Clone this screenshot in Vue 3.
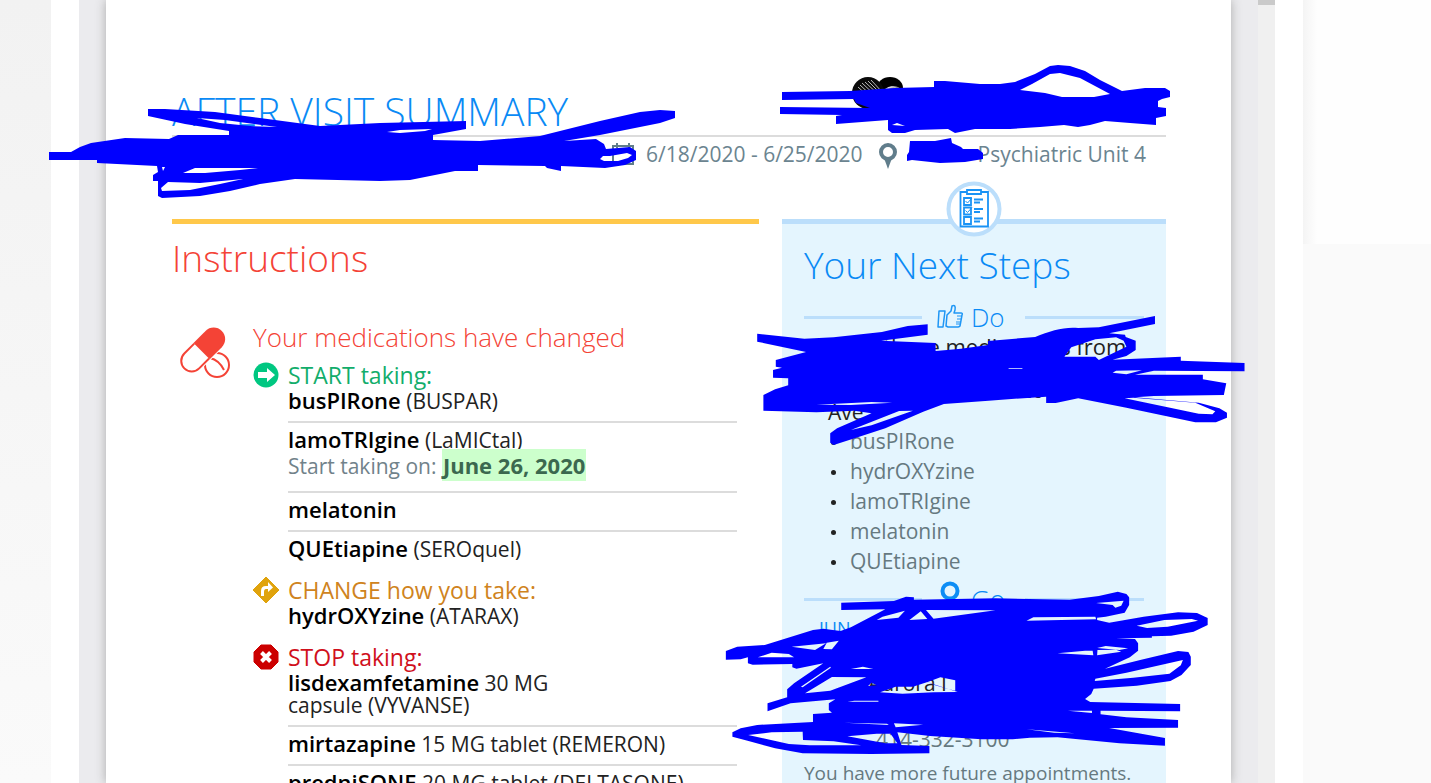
<script setup>
    const groups = [
        {
            type: 'start',
            title: 'START taking:',
            meds: [
                { name: 'busPIRone', detail: '(BUSPAR)' },
                { name: 'lamoTRIgine', detail: '(LaMICtal)', start: 'June 26, 2020' },
                { name: 'melatonin', detail: '' },
                { name: 'QUEtiapine', detail: '(SEROquel)' },
            ],
        },
        {
            type: 'change',
            title: 'CHANGE how you take:',
            meds: [
                { name: 'hydrOXYzine', detail: '(ATARAX)' },
            ],
        },
        {
            type: 'stop',
            title: 'STOP taking:',
            meds: [
                { name: 'lisdexamfetamine', detail: '30 MG capsule (VYVANSE)', narrow: true },
                { name: 'mirtazapine', detail: '15 MG tablet (REMERON)' },
                { name: 'predniSONE', detail: '20 MG tablet (DELTASONE)' },
            ],
        },
    ];

    const pickups = ['busPIRone', 'hydrOXYzine', 'lamoTRIgine', 'melatonin', 'QUEtiapine'];
</script>

<template>
    <div class="viewer">
        <div class="rail-left"></div>
        <div class="desk">
            <main class="page">
                <header class="page-header">
                    <h1>AFTER VISIT SUMMARY</h1>
                    <svg class="logo" viewBox="0 0 56 34" aria-hidden="true">
                        <ellipse cx="39" cy="12" rx="13" ry="11" fill="#000" />
                        <path d="M32 20Q34 11 42 10Q48 10 52 15L54 12L55 20Z" fill="#888" />
                        <path d="M34 13Q40 8 46 12Q40 10 35 15Z" fill="#ddd" />
                        <ellipse cx="17" cy="17" rx="16" ry="16" fill="#0a0a0a" />
                        <path d="M14 6L29 20M17 5L31 19M20 4L32 17M11 7L26 21M9 9L22 21M7 11L18 21" fill="none" stroke="#bbb" stroke-width="1" />
                    </svg>
                </header>
                <div class="meta">
                    <svg class="calendar" viewBox="0 0 22 22" aria-hidden="true">
                        <path d="M1 3H21V21H1Z M1 7H21 M5 0V5 M17 0V5" fill="none" stroke="#607d8b" stroke-width="2" />
                    </svg>
                    <span class="dates">6/18/2020 - 6/25/2020</span>
                    <svg class="pin" viewBox="0 0 18 26" aria-hidden="true">
                        <circle cx="9" cy="9" r="7" fill="none" stroke="#607d8b" stroke-width="4" />
                        <path d="M5 15H13L9 26Z" fill="#607d8b" />
                    </svg>
                    <span class="unit">Psychiatric Unit 4</span>
                </div>

                <div class="columns">
                    <section class="instructions">
                        <h2>Instructions</h2>
                        <div class="med-block">
                            <svg class="pills" viewBox="0 0 52 52" aria-hidden="true">
                                <circle cx="38" cy="38" r="12" fill="#fff" stroke="#f44336" stroke-width="2" />
                                <path d="M31 31Q40 33 45 43" fill="none" stroke="#f44336" stroke-width="2" />
                                <g transform="rotate(-45 23 23)">
                                    <rect x="-4" y="11" width="56" height="25" rx="12" fill="#fff" />
                                    <path d="M24 13H10A10 10 0 0 0 10 34H24" transform="translate(-2 0)" fill="#fff" stroke="#f44336" stroke-width="2" />
                                    <path d="M22 12H39A11 11 0 0 1 39 35H22Z" fill="#f44336" />
                                </g>
                            </svg>
                            <div class="med-body">
                                <h3>Your medications have changed</h3>
                                <div class="group" v-for="group in groups" :key="group.type">
                                    <svg v-if="group.type == 'start'" class="group-icon" viewBox="0 0 26 26" aria-hidden="true">
                                        <circle cx="13" cy="13" r="12.5" fill="#00c781" />
                                        <path d="M5 10H14V6L22 13L14 20V16H5Z" fill="#fff" />
                                    </svg>
                                    <svg v-else-if="group.type == 'change'" class="group-icon" viewBox="0 0 26 26" aria-hidden="true">
                                        <path d="M13 0L26 13L13 26L0 13Z" fill="#e0a30c" stroke="#e0a30c" stroke-linejoin="round" />
                                        <path d="M8 19V14Q8 9 13 9H15V5L20 10.500L15 15V12H13Q11 12 11 15V19Z" fill="#fff" />
                                    </svg>
                                    <svg v-else class="group-icon" viewBox="0 0 26 26" aria-hidden="true">
                                        <path d="M8 1H18L25 8V18L18 25H8L1 18V8Z" fill="#c00" stroke="#c00" stroke-linejoin="round" />
                                        <path d="M8.500 8.500L17.500 17.500M17.500 8.500L8.500 17.500" stroke="#fff" stroke-width="4" />
                                    </svg>
                                    <div class="group-body">
                                        <h4 :class="group.type">{{ group.title }}</h4>
                                        <ul class="meds">
                                            <li v-for="med in group.meds" :key="med.name">
                                                <div :class="{ narrow: med.narrow }"><strong>{{ med.name }}</strong> {{ med.detail }}</div>
                                                <div class="note" v-if="med.start">Start taking on: <mark>{{ med.start }}</mark></div>
                                            </li>
                                        </ul>
                                    </div>
                                </div>
                            </div>
                        </div>
                    </section>

                    <aside class="steps">
                        <svg class="badge" viewBox="0 0 56 56" aria-hidden="true">
                            <circle cx="28" cy="28" r="25.500" fill="#fff" stroke="#bbdefb" stroke-width="4" />
                            <g fill="none" stroke="#1a93f5" stroke-width="1.800">
                                <path d="M21 11H14.500V45.500H42V11H35M21 9H35V13H21Z" />
                                <path d="M18 17H25V24H18ZM18 26.500H25V33.500H18ZM18 36H25V43H18Z" />
                                <path d="M28 18.500H37M28 21.500H34M28 28H37M28 31H34M28 37.500H37M28 40.500H34" />
                            </g>
                            <path d="M19.500 20L21.500 22L26 17M19.500 29.500L21.500 31.500L26 26.500" fill="none" stroke="#1a93f5" />
                        </svg>
                        <h2>Your Next Steps</h2>
                        <div class="divider">
                            <svg viewBox="0 0 26 24" aria-hidden="true">
                                <path d="M2 6H8L6 22H1ZM9 21L10 10L14 6L15 1Q19 -1 18 5L17 8H24Q26 8 25 10L23 21Q22 22 21 22H11Z" fill="none" stroke="#1e96f5" stroke-width="1.500" stroke-linejoin="round" />
                                <path d="M20 11H25M20 14H24M19 17H24M19 19H23" stroke="#1e96f5" />
                            </svg>
                            <h3>Do</h3>
                        </div>
                        <p class="pickup">Pick up these medications from</p>
                        <div class="pharmacy">
                            <span class="street">220</span>
                            <span>Ave</span>
                        </div>
                        <ul class="pickups">
                            <li v-for="item in pickups" :key="item">{{ item }}</li>
                        </ul>
                        <div class="divider go">
                            <svg viewBox="0 0 26 24" aria-hidden="true">
                                <circle cx="13" cy="4" r="7.500" fill="none" stroke="#0d8df5" stroke-width="4" />
                                <path d="M9 12H17L13 22Z" fill="#0d8df5" />
                            </svg>
                            <h3>Go</h3>
                        </div>
                        <div class="visit">
                            <span class="month">JUN</span>
                            <span class="place">Aurora I</span>
                            <span class="phone">414-332-3100</span>
                        </div>
                        <p class="more">You have more future appointments.</p>
                    </aside>
                </div>
            </main>
            <div class="scrollbar"><div class="thumb"></div></div>
        </div>
        <div class="rail-right"><div class="panel"></div></div>

        <!-- marker strokes over the private parts of the document -->
        <svg class="marker" viewBox="0 0 1431 783" fill="#00f" fill-rule="evenodd" aria-hidden="true">
            <path d="M49 152H71L80 147L91 143L125 138L169 139L178 135H229V131L185 124L148 116V109H165L215 112L260 118L320 126L380 123L466 121V129L433 135V140L480 141L540 136L600 121L640 112L660 110L675 111V118L660 123L640 127L600 135L564 141L596 139L604 144L606 149L630 147L636 151V160L625 165L605 168L561 166V171L547 168L545 166L478 165V171H455L430 176L410 180L380 181L295 179L260 184L230 191L200 196L162 198L158 196V181H153V175L158 172L157 166L97 163V160H49Z
                M197 118L225 120L277 127L250 126L220 123Z M387 132L400 130L432 129L425 131L400 133Z M162 167H165L163 171Z M195 168H258L240 170L205 173H183Z M161 188L168 182L200 183L243 179L220 184L190 190L162 191Z M600 159L603 156H610L627 153L632 155L628 158L618 161H604Z" />
            <path d="M782 92L850 91L895 88L934 87V81H945L980 84H1000L1015 82L1035 74L1050 66L1058 65L1070 66L1085 71L1100 80L1122 91L1145 88H1165L1170 91V97L1162 99L1158 101V107L1166 108V116L1156 118V125L1130 123L1105 121L1090 125L1078 127L1064 125L1040 127L1010 129H975L955 133L948 129L915 130L905 133H892L888 130V120L836 124V116L842 115L780 114V107L870 108L856 103L854 99L782 100Z
                M1020 90L1032 84L1050 74L1060 73L1080 78L1095 86L1110 94L1094 97L1062 97L1045 93Z M892 125L897 123L905 126Z" />
            <path d="M910 141H935L951 138L952 143L961 147L963 149H978L983 153V159L965 162L940 163L912 160L907 161V155L909 152Z" />
            <path transform="translate(720 240) scale(0.3444 0.3333)" d="M108 281L245 296L330 292L470 276L545 258L603 253V284L468 302L626 309V333L700 326L778 315V303L915 291C960 272 1000 260 1040 264L1100 262L1263 228V252L1130 280L1176 284L1178 291L1207 302V330L1180 348L1140 359L1338 350V362L1523 369V394L1260 392L1205 404H1402V418L1470 430L1463 465L1260 468L1205 472L1390 488L1450 505L1472 518V533L1440 547H1380L1180 503L1040 475L975 489H947V470L780 482L650 492L590 515L480 565L400 592L330 615L320 608V580L340 565L440 520L390 512L280 517L126 512V465L160 448L198 436V415L154 413V390L180 383L162 380V360L250 336L108 305Z
                M1020 322L1090 298L1150 292L1172 302L1180 320L1100 360L1090 350L1000 350Z M1140 398L1150 392L1225 391L1180 403Z M1175 475L1200 473L1380 488L1438 514L1430 523L1390 521Z M280 494L440 486L500 488L380 495Z M380 570L520 513L560 512L440 556Z M838 385H878V387H838Z" />
            <path transform="translate(720 570) scale(0.3444 0.3333)" d="M352 98L505 93L540 80L563 82V89L800 85L1015 89L1100 78L1155 65L1180 72L1188 82V105L1175 128L1120 140L1095 143V150L1130 158L1230 140L1330 127L1385 129L1416 144V165L1375 185L1310 197L1254 199V203L1150 205L1205 207L1214 220V242L1190 262L1118 296L1220 270L1330 243L1360 246L1367 260V285L1340 315L1308 333L1210 347L1085 356L1078 372L1060 387L1075 396L1336 402V424L1105 422V433L1180 442L1330 450V473L1130 474L1292 504V527L1160 520L980 502L900 503L850 508H760L610 498L515 487L527 525L608 528V550L440 552L240 550L160 535L80 512L36 500V487L60 475L108 465L270 456V432L325 428L316 420V400L335 388L205 400L138 424V400L195 382V358L215 340L300 280L222 296L210 292V282L95 284L81 280V262L60 268L17 269V243L50 230L130 225L270 180L300 176L350 183L380 172L480 118L352 120Z
                M1092 99L1172 92L1165 107L1148 113L1140 105Z M455 150L472 140L537 122L518 143Z M550 150L583 124L602 147Z M598 120L800 121L620 146Z M890 152L910 142L1090 140L1092 148Z M1210 167L1290 150L1370 147L1388 152L1300 170L1240 174Z M110 262L150 248L200 252L215 262Z M208 230L308 220L276 240Z M300 237L310 218L345 212L325 238Z M980 250L1060 242H1082L1084 256Z M1096 240L1150 239L1165 245L1095 256Z M1095 234L1120 228L1185 235L1160 240Z M1090 326L1180 308L1344 270L1338 286L1305 311L1200 323L1088 333Z M235 350L320 290L322 293L240 352Z M247 370L325 321L425 322L320 362Z M380 297L415 290L445 297Z M430 348L440 338L455 346Z M465 367L510 350L560 350L605 335L640 322L683 331V362L660 356L625 346L600 336L690 366L620 367L530 371Z M370 395L390 392H460V395Z M1010 422H1080V429Z M82 495L150 487L240 485L241 510L330 514L410 526H260L200 522Z M370 499L455 491H495L515 520H480Z M360 458L485 461L490 465Z M505 460L590 464L510 472Z M890 478L1030 490L970 488Z" />
        </svg>
    </div>
</template>

<style>
    body{
        margin: 0;
        background: #fff;
    }
</style>

<style scoped>
    .viewer{
        position: relative;
        display: flex;
        gap: 28px;
        height: 100vh;
        overflow: hidden;
        font-family: "Open Sans", "Noto Sans", sans-serif;
        font-size: 21px;
        line-height: 22px;
        color: #222;
    }
    .rail-left{
        width: 51px;
        background: linear-gradient(#f2f2f2, #fafafa);
    }
    .rail-right{
        width: 128px;
        background: #fafafa;
    }
    .panel{
        height: 244px;
        background: linear-gradient(90deg, #f4f4f4, #fefefe 14px);
    }
    .desk{
        flex: 1;
        display: flex;
        padding-left: 27px;
        background: #ebebee;
    }
    .page{
        flex: 1;
        box-sizing: border-box;
        min-width: 0;
        margin-right: 27px;
        padding: 87px 65px 0 66px;
        background: #fff;
        box-shadow: 0 0 10px #aaa;
    }
    .scrollbar{
        width: 17px;
        background: #f0f0f0;
    }
    .thumb{
        height: 5px;
        background: #cacaca;
    }
    h1, h2, h3, h4, p, ul{
        margin: 0;
        padding: 0;
    }
    h1, h2, h3{
        font-weight: 300;
    }
    h4{
        font-weight: 400;
    }
    ul{
        list-style: none;
    }
    .page-header{
        display: flex;
        justify-content: space-between;
        height: 48px;
        border-bottom: 2px solid #dcdcdc;
    }
    h1{
        font-size: 39px;
        line-height: 48px;
        color: #0a8af5;
    }
    .logo{
        width: 56px;
        height: 34px;
        margin: -11px 259px 0 0;
    }
    .meta{
        display: flex;
        align-items: center;
        justify-content: flex-end;
        height: 34px;
        padding-right: 20px;
        color: #6b8490;
    }
    .calendar{
        width: 22px;
        height: 22px;
        margin-right: 12px;
    }
    .pin{
        width: 18px;
        height: 26px;
        margin: 4px 81px 0 16px;
    }
    .columns{
        display: grid;
        grid-template-columns: 587fr 384fr;
        gap: 23px;
        padding-top: 48px;
    }
    .instructions{
        padding-right: 22px;
        border-top: 5px solid #ffc84a;
    }
    h2{
        font-size: 37px;
        line-height: 50px;
    }
    .instructions h2{
        padding: 9px 0 37px;
        color: #f44336;
    }
    .med-block{
        display: grid;
        grid-template-columns: 81px 1fr;
    }
    .pills{
        width: 52px;
        height: 52px;
        margin: 7px 0 0 7px;
    }
    .med-body h3{
        font-size: 26px;
        line-height: 34px;
        margin-bottom: 8px;
        color: #f44336;
    }
    .group{
        display: grid;
        grid-template-columns: 35px 1fr;
        margin-bottom: 9px;
    }
    .group-icon{
        width: 26px;
        height: 26px;
    }
    h4{
        font-size: 23px;
        line-height: 26px;
    }
    h4.start{
        color: #12ad6b;
    }
    h4.change{
        color: #cf8320;
    }
    h4.stop{
        color: #d0101c;
    }
    .meds li{
        padding: 6px 0 9px;
        border-bottom: 2px solid #dcdcdc;
    }
    .meds li:first-child{
        padding-top: 2px;
    }
    .meds li:last-child{
        padding-bottom: 8px;
        border-bottom: 0;
    }
    .meds strong, mark{
        font-size: 22px;
        line-height: 20px;
    }
    .meds strong{
        font-weight: 600;
        color: #000;
    }
    .narrow{
        max-width: 280px;
    }
    .note{
        padding: 4px 0 5px;
        color: #71828a;
    }
    mark{
        padding: 1px;
        background: #ccffcc;
        color: #3b684f;
        font-weight: 700;
    }
    .steps{
        position: relative;
        padding: 0 22px;
        border-top: 5px solid #bbdefb;
        background: #e4f5fe;
        color: #667980;
    }
    .badge{
        position: absolute;
        top: -43px;
        left: 50%;
        width: 56px;
        height: 56px;
        margin-left: -28px;
    }
    .steps h2{
        padding: 16px 0 11px;
        color: #0a8af5;
    }
    .divider{
        display: grid;
        grid-template-columns: 1fr 26px 40px 1fr;
        align-items: center;
        column-gap: 8px;
        height: 32px;
        color: #0a8af5;
    }
    .divider::before, .divider::after{
        content: "";
        height: 3px;
        margin-right: 7px;
        background: #bbdefb;
    }
    .divider::after{
        margin: 0 0 0 6px;
    }
    .divider svg{
        width: 26px;
        height: 24px;
        overflow: visible;
    }
    .divider h3{
        font-size: 26px;
    }
    .pickup{
        padding-top: 2px;
        font-size: 22px;
        color: #222;
    }
    .pharmacy{
        display: flex;
        flex-direction: column;
        padding: 22px 0 3px 24px;
        color: #222;
    }
    .street{
        padding-left: 180px;
    }
    .pickups li{
        display: flex;
        align-items: center;
        line-height: 30px;
    }
    .pickups li::before{
        content: "";
        width: 5px;
        height: 5px;
        margin: 3px 14px 0 27px;
        border-radius: 3px;
        background: #222;
    }
    .go{
        height: 46px;
    }
    .visit{
        display: flex;
        flex-direction: column;
    }
    .month{
        margin-top: -5px;
        padding: 0 0 33px 15px;
        font-size: 18px;
        color: #0a8af5;
    }
    .place{
        padding: 0 0 34px 64px;
        color: #222;
    }
    .phone{
        padding-left: 72px;
    }
    .more{
        padding: 12px 0 20px;
        font-size: 19px;
        white-space: nowrap;
    }
    .marker{
        position: absolute;
        top: 0;
        left: 0;
        width: 1431px;
        height: 783px;
        pointer-events: none;
    }
</style>
